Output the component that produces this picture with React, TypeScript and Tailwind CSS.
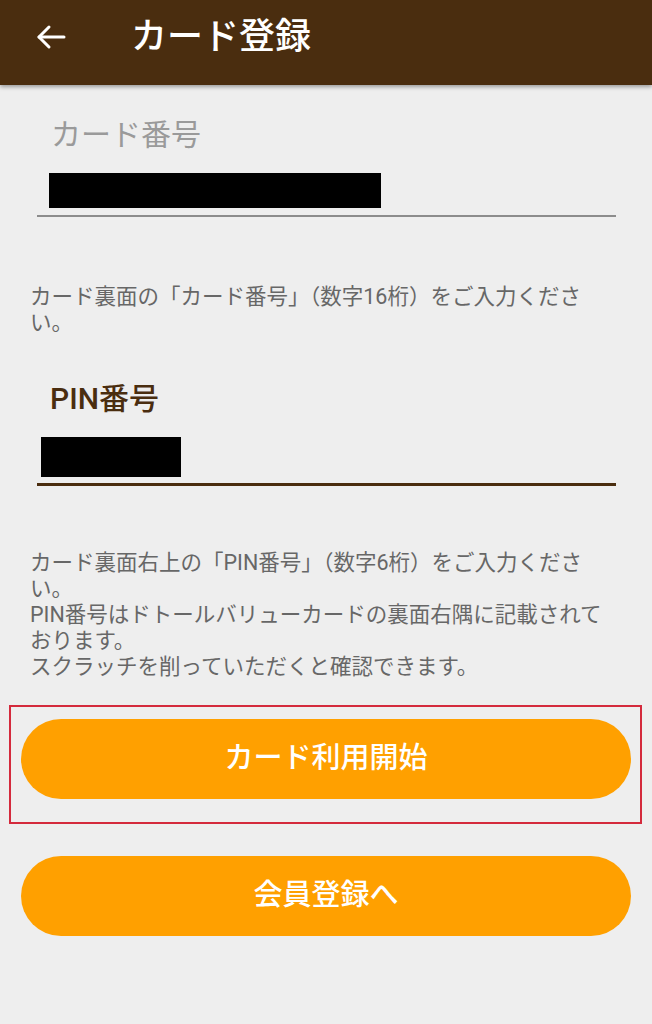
export default function App() {
  const font = { fontFamily: 'Roboto, "Noto Sans CJK JP", sans-serif' };
  return (
    <div
      className="w-[652px] min-h-[1024px] bg-[#eeeeee] font-['Roboto','Noto_Sans_CJK_JP',sans-serif]"
      style={font}
    >
      <header className="relative z-10 flex h-[85px] items-center bg-[#4a2d0f] pb-[11px] shadow-[0_2px_4px_rgba(0,0,0,0.35)]">
        <svg
          className="ml-[36px]"
          width="30"
          height="26"
          viewBox="0 0 30 26"
          fill="none"
          stroke="white"
          strokeWidth="3"
          strokeLinecap="round"
          strokeLinejoin="round"
        >
          <path d="M28 13H3" />
          <path d="M13 3L3 13l10 10" />
        </svg>
        <h1 className="ml-[65px] text-[36px] leading-none font-medium text-white">カード登録</h1>
      </header>

      <section className="ml-[37px] w-[579px] pt-[32px]">
        <div className="pl-[14px] text-[30px] leading-[36px] text-[#9a9a9a]">カード番号</div>
        <div className="mt-[20px] ml-[12px] h-[35px] w-[332px] bg-black" />
        <div className="mt-[7px] h-[2px] bg-[#8c8c8c]" />
      </section>

      <p className="mt-[67px] px-[30px] text-[21.5px] leading-[26px] text-[#676767]">
        カード裏面の「カード番号」（数字16桁）をご入力ください。
      </p>

      <section className="ml-[37px] mt-[45px] w-[579px]">
        <div className="pl-[13px] text-[30px] leading-[36px] font-medium text-[#4a2d0f]">PIN番号</div>
        <div className="mt-[20px] ml-[4px] h-[40px] w-[140px] bg-black" />
        <div className="mt-[6px] h-[3px] bg-[#4a2d0f]" />
      </section>

      <p className="mt-[64px] px-[30px] text-[21.5px] leading-[26px] text-[#676767]">
        カード裏面右上の「PIN番号」（数字6桁）をご入力ください。
        <br />
        PIN番号はドトールバリューカードの裏面右隅に記載されております。
        <br />
        スクラッチを削っていただくと確認できます。
      </p>

      <div className="ml-[9px] mt-[25px] w-[633px] border-2 border-[#d42a3c] pt-[12px] pb-[23px] pl-[10px] pr-[9px]">
        <button className="flex h-[80px] w-[610px] items-center justify-center rounded-full bg-[#ffa000] text-[29px] font-medium text-white">
          カード利用開始
        </button>
      </div>

      <button className="ml-[21px] mt-[32px] flex h-[80px] w-[610px] items-center justify-center rounded-full bg-[#ffa000] text-[29px] font-medium text-white">
        会員登録へ
      </button>
    </div>
  );
}
